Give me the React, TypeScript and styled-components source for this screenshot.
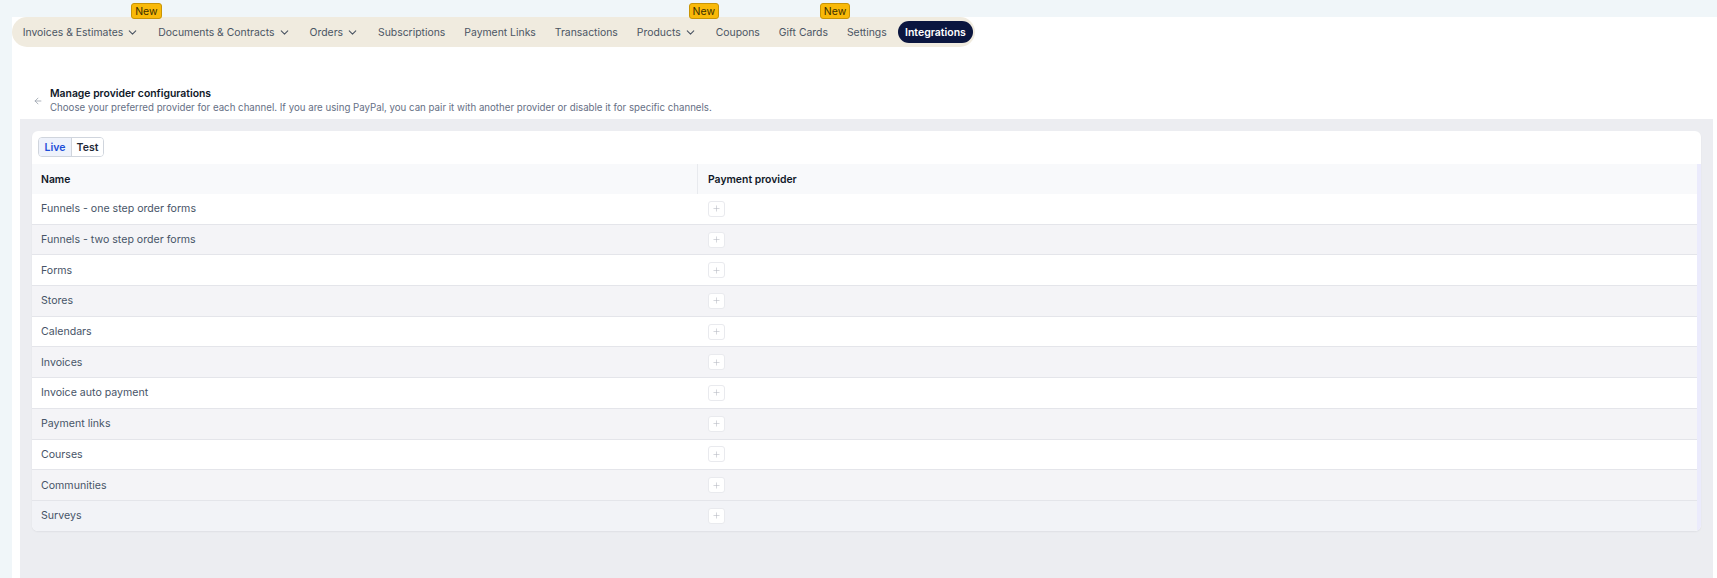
import React from 'react'
import styled, { createGlobalStyle } from 'styled-components'
import { ArrowLeft, ChevronDown, Plus } from 'lucide-react'

const GlobalStyle = createGlobalStyle`
  html, body {
    margin: 0;
    padding: 0;
    background: #f0f6f9;
    font-family: 'Inter', 'Noto Sans', sans-serif;
  }
  * { box-sizing: border-box; }
`

const Page = styled.div`
  padding: 17px 0 0 12px;
  min-height: 100vh;
  display: flex;
`

const Panel = styled.div`
  flex: 1;
  background: #ffffff;
  display: flex;
  flex-direction: column;
`

const NavBar = styled.nav`
  align-self: flex-start;
  display: flex;
  align-items: center;
  height: 30px;
  padding: 0 2px 0 1px;
  background: #f0ebdf;
  border-radius: 15px;
`

const NavItem = styled.div`
  position: relative;
  display: flex;
  align-items: center;
  height: 100%;
  padding: 0 9.3px 0 9.7px;
  font-size: 10.4px;
  color: #4b5563;
  white-space: nowrap;

  svg {
    margin-left: 3px;
    color: #4b5563;
  }
`

const NewBadge = styled.span`
  position: absolute;
  top: -14px;
  right: -13px;
  height: 16px;
  padding: 0 3px;
  display: flex;
  align-items: center;
  background: #f9b908;
  border: 1px solid #c99505;
  border-radius: 3px;
  font-size: 10.5px;
  color: #3d3000;
`

const ActivePill = styled.div`
  margin-left: 2px;
  height: 22px;
  padding: 0 7px;
  display: flex;
  align-items: center;
  background: #0b163f;
  color: #ffffff;
  border-radius: 11px;
  font-size: 10.5px;
  font-weight: 600;
  white-space: nowrap;
`

const Header = styled.div`
  display: flex;
  align-items: center;
  gap: 7px;
  padding: 40px 0 0 21px;
  color: #9ca3af;
`

const TitleBlock = styled.div`
  display: flex;
  flex-direction: column;
`

const Title = styled.div`
  font-size: 10.4px;
  line-height: 14px;
  font-weight: 600;
  color: #101828;
`

const Subtitle = styled.div`
  font-size: 9.7px;
  line-height: 13px;
  color: #667085;
`

const GreyArea = styled.div`
  flex: 1;
  margin: 5px 4px 0 8px;
  padding: 12px;
  background: #ecedf1;
`

const Card = styled.div`
  background: #ffffff;
  border-radius: 6px;
  padding-top: 6px;
  box-shadow: 0 1px 2px rgba(16, 24, 40, 0.06);
  overflow: hidden;
`

const Tabs = styled.div`
  display: flex;
  width: fit-content;
  margin: 0 0 7px 6px;
  border: 1px solid #d0d5dd;
  border-radius: 4px;
  overflow: hidden;
`

const Tab = styled.div<{ $active?: boolean }>`
  width: 32px;
  height: 18px;
  display: flex;
  align-items: center;
  justify-content: center;
  font-size: 10.5px;
  font-weight: 600;
  color: ${p => (p.$active ? '#1d4ed8' : '#1f2937')};
  background: ${p => (p.$active ? '#eef2fb' : '#ffffff')};
  & + & { border-left: 1px solid #d0d5dd; }
`

const TableWrap = styled.div`
  display: flex;
`

const Table = styled.div`
  flex: 1;
  display: grid;
  grid-template-columns: 665px 1fr;
`

const ScrollTrack = styled.div`
  width: 4px;
  background: #ebebfc;
`

const HeadCell = styled.div<{ $divider?: boolean }>`
  height: 30px;
  display: flex;
  align-items: center;
  padding-left: ${p => (p.$divider ? '10px' : '9px')};
  background: #f8f9fb;
  font-size: 10.4px;
  font-weight: 600;
  color: #101828;
  border-left: ${p => (p.$divider ? '1px solid #e8eaee' : 'none')};
`

const Cell = styled.div<{ $shade: string; $last?: boolean; $second?: boolean }>`
  height: ${p => (p.$last ? '29.7px' : '30.7px')};
  display: flex;
  align-items: center;
  padding-left: ${p => (p.$second ? '11px' : '9px')};
  background: ${p => p.$shade};
  border-bottom: ${p => (p.$last ? 'none' : '1px solid #e4e5ea')};
  font-size: 10.6px;
  color: #475467;
`

const AddButton = styled.div`
  width: 17px;
  height: 16px;
  display: flex;
  align-items: center;
  justify-content: center;
  border: 1px solid #e9eaee;
  border-radius: 3px;
  background: #ffffff;
  color: #b4b8c0;
`

const navItems: { label: string; menu?: boolean; isNew?: boolean }[] = [
  { label: 'Invoices & Estimates', menu: true, isNew: true },
  { label: 'Documents & Contracts', menu: true },
  { label: 'Orders', menu: true },
  { label: 'Subscriptions' },
  { label: 'Payment Links' },
  { label: 'Transactions' },
  { label: 'Products', menu: true, isNew: true },
  { label: 'Coupons' },
  { label: 'Gift Cards', isNew: true },
  { label: 'Settings' },
]

const channels = [
  'Funnels - one step order forms',
  'Funnels - two step order forms',
  'Forms',
  'Stores',
  'Calendars',
  'Invoices',
  'Invoice auto payment',
  'Payment links',
  'Courses',
  'Communities',
  'Surveys',
]

function shadeFor(i: number) {
  if (i === channels.length - 1) return '#f2f3f7'
  return i % 2 === 0 ? '#ffffff' : '#f4f4f7'
}

export default function App() {
  return (
    <Page>
      <GlobalStyle />
      <Panel>
        <NavBar>
          {navItems.map(item => (
            <NavItem key={item.label}>
              {item.label}
              {item.menu && <ChevronDown size={13} strokeWidth={2} />}
              {item.isNew && <NewBadge>New</NewBadge>}
            </NavItem>
          ))}
          <ActivePill>Integrations</ActivePill>
        </NavBar>

        <Header>
          <ArrowLeft size={10} strokeWidth={2} />
          <TitleBlock>
            <Title>Manage provider configurations</Title>
            <Subtitle>
              Choose your preferred provider for each channel. If you are using PayPal, you can pair it with another
              provider or disable it for specific channels.
            </Subtitle>
          </TitleBlock>
        </Header>

        <GreyArea>
          <Card>
            <Tabs>
              <Tab $active>Live</Tab>
              <Tab>Test</Tab>
            </Tabs>
            <TableWrap>
              <Table>
                <HeadCell>Name</HeadCell>
                <HeadCell $divider>Payment provider</HeadCell>
                {channels.map((name, i) => {
                  const last = i === channels.length - 1
                  const shade = shadeFor(i)
                  return (
                    <React.Fragment key={name}>
                      <Cell $shade={shade} $last={last}>{name}</Cell>
                      <Cell $shade={shade} $last={last} $second>
                        <AddButton>
                          <Plus size={9} strokeWidth={1.5} />
                        </AddButton>
                      </Cell>
                    </React.Fragment>
                  )
                })}
              </Table>
              <ScrollTrack />
            </TableWrap>
          </Card>
        </GreyArea>
      </Panel>
    </Page>
  )
}
